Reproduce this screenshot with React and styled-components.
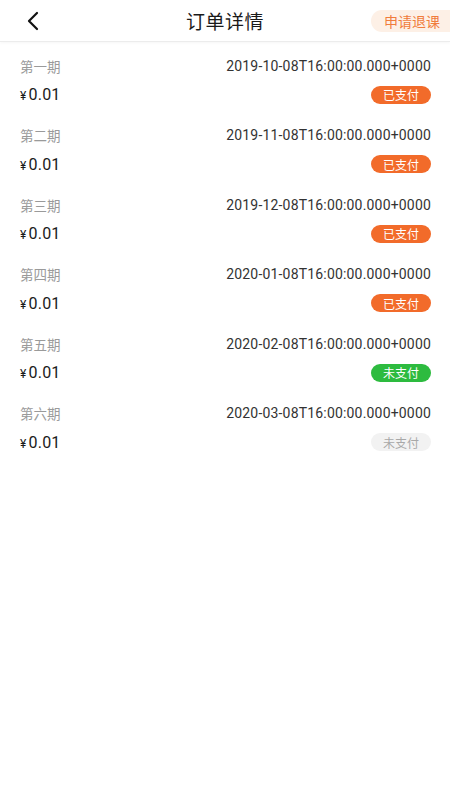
import styled, { createGlobalStyle } from "styled-components";

const GlobalStyle = createGlobalStyle`
  html, body {
    margin: 0;
    padding: 0;
    background: #fff;
  }
  body {
    font-family: Roboto, "Noto Sans CJK SC", sans-serif;
    color: #222;
  }
`;

const Page = styled.div`
  width: 450px;
  min-height: 800px;
  background: #fff;
`;

const Header = styled.div`
  height: 41px;
  display: grid;
  grid-template-columns: 1fr auto 1fr;
  align-items: center;
  border-bottom: 1px solid #ececec;
  box-shadow: 0 1px 3px rgba(0, 0, 0, 0.04);
`;

const Back = styled.div`
  padding-left: 25px;
  display: flex;
  align-items: center;
`;

const Title = styled.h1`
  margin: 0;
  font-size: 19px;
  font-weight: 400;
  color: #1a1a1a;
  letter-spacing: 0.5px;
`;

const Refund = styled.div`
  justify-self: end;
  height: 22px;
  width: 66px;
  padding-left: 13px;
  display: flex;
  align-items: center;
  background: #fdf0e6;
  border-radius: 11px 0 0 11px;
  color: #f07c3c;
  font-size: 14px;
  white-space: nowrap;
`;

const Row = styled.div`
  padding: 13.5px 19px 7px 20px;
`;

const Line = styled.div`
  height: 20px;
  display: flex;
  align-items: center;
  justify-content: space-between;
  & + & {
    margin-top: 9px;
  }
`;

const Period = styled.span`
  font-size: 13.5px;
  color: #9a9a9a;
`;

const Date = styled.span`
  font-size: 14px;
  letter-spacing: 0.18px;
  color: #333;
`;

const Price = styled.span`
  font-size: 16px;
  letter-spacing: 0.2px;
  color: #1a1a1a;
  small {
    font-size: 12px;
    margin-right: 2px;
  }
`;

const palette = {
  paid: { bg: "#f26b2a", fg: "#fff" },
  due: { bg: "#2dbb3f", fg: "#fff" },
  none: { bg: "#f2f2f2", fg: "#a8a8a8" },
};

const Badge = styled.span`
  width: 60px;
  height: 18px;
  border-radius: 9px;
  display: flex;
  align-items: center;
  justify-content: center;
  font-size: 12px;
  background: ${(p) => palette[p.$kind].bg};
  color: ${(p) => palette[p.$kind].fg};
`;

const rows = [
  { name: "第一期", date: "2019-10-08T16:00:00.000+0000", kind: "paid", label: "已支付" },
  { name: "第二期", date: "2019-11-08T16:00:00.000+0000", kind: "paid", label: "已支付" },
  { name: "第三期", date: "2019-12-08T16:00:00.000+0000", kind: "paid", label: "已支付" },
  { name: "第四期", date: "2020-01-08T16:00:00.000+0000", kind: "paid", label: "已支付" },
  { name: "第五期", date: "2020-02-08T16:00:00.000+0000", kind: "due", label: "未支付" },
  { name: "第六期", date: "2020-03-08T16:00:00.000+0000", kind: "none", label: "未支付" },
];

const App = () => {
  return (
    <Page>
      <GlobalStyle />
      <Header>
        <Back>
          <svg width="16" height="20" viewBox="0 0 16 20">
            <polyline
              points="12,2 4,10 12,18"
              fill="none"
              stroke="#111"
              strokeWidth="2.2"
              strokeLinecap="round"
              strokeLinejoin="round"
            />
          </svg>
        </Back>
        <Title>订单详情</Title>
        <Refund>申请退课</Refund>
      </Header>
      {rows.map((r) => (
        <Row key={r.name}>
          <Line>
            <Period>{r.name}</Period>
            <Date>{r.date}</Date>
          </Line>
          <Line>
            <Price>
              <small>¥</small>0.01
            </Price>
            <Badge $kind={r.kind}>{r.label}</Badge>
          </Line>
        </Row>
      ))}
    </Page>
  );
};

export default App;
